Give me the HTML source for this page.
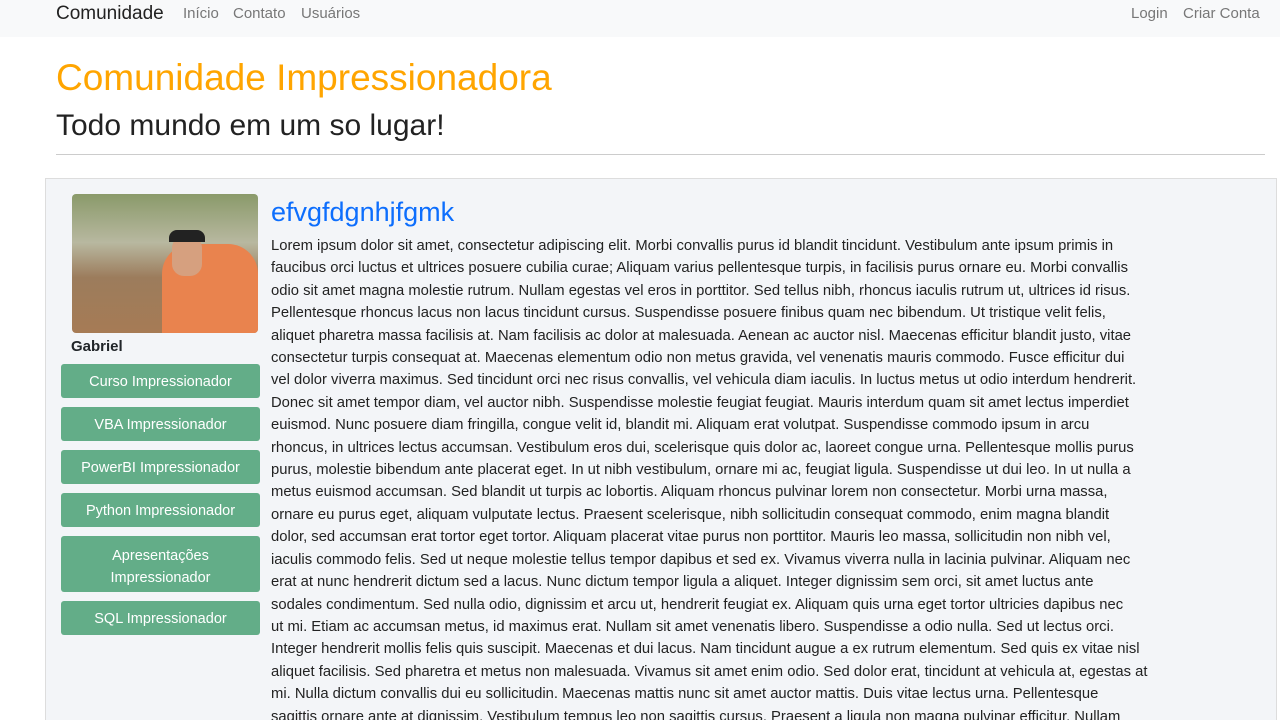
<!DOCTYPE html>
<html style="overflow:hidden;height:720px"><head><meta charset="utf-8"><style>
body{margin:0;font-family:"Liberation Sans",sans-serif;background:#fff;width:1280px;height:720px;overflow:hidden;color:#212529;position:relative}
.nav{height:37px;background:#f8f9fa;position:relative}
.nav span{position:absolute;top:5px;font-size:15px;color:#777}
.brand{left:56px!important;font-size:19px!important;color:#222!important;top:3px!important}
h1{position:absolute;left:56px;top:57px;margin:0;font-weight:400;font-size:37px;color:#ffa500}
h2{position:absolute;left:56px;top:109px;margin:0;font-weight:400;font-size:30px;color:#222}
.hr{position:absolute;left:56px;top:154px;width:1209px;height:1px;background:#ccc}
.card{position:absolute;left:45px;top:178px;width:1230px;height:542px;background:#f3f5f8;border:1px solid #ddd;border-bottom:none}
.photo{position:absolute;left:72px;top:194px;width:186px;height:139px;border-radius:4px;background:linear-gradient(180deg,#8a9a6a 0%,#b8b8a0 35%,#9c7c5c 60%,#a67b55 100%);overflow:hidden}
.name{position:absolute;left:71px;top:338px;font-weight:bold;font-size:15px}
.btn{position:absolute;left:61px;width:199px;background:#63ad88;color:#fff;font-size:14.5px;text-align:center;border-radius:3px;line-height:22px}
.t{position:absolute;left:271px;top:197px;font-size:27px;color:#0d6efd}
.txt{position:absolute;left:271px;top:235px;height:485px;overflow:hidden;font-size:14.8px;line-height:22.4px;color:#222;white-space:nowrap}
</style></head><body>
<div class="nav"><span class="brand">Comunidade</span><span style="left:183px">Início</span><span style="left:233px">Contato</span><span style="left:301px">Usuários</span><span style="left:1131px">Login</span><span style="left:1183px">Criar Conta</span></div>
<h1>Comunidade Impressionadora</h1>
<h2>Todo mundo em um so lugar!</h2>
<div class="hr"></div>
<div class="card"></div>
<div class="photo"><div style="position:absolute;left:90px;top:50px;width:96px;height:89px;background:#e9834e;border-radius:30px 30px 0 0"></div><div style="position:absolute;left:100px;top:42px;width:30px;height:40px;background:#d6a07f;border-radius:12px"></div><div style="position:absolute;left:97px;top:36px;width:36px;height:12px;background:#222;border-radius:8px 8px 0 0"></div></div>
<div class="name">Gabriel</div>
<div class="btn" style="top:364px;height:34px;line-height:37px">Curso Impressionador</div>
<div class="btn" style="top:407px;height:34px;line-height:37px">VBA Impressionador</div>
<div class="btn" style="top:450px;height:34px;line-height:37px">PowerBI Impressionador</div>
<div class="btn" style="top:493px;height:34px;line-height:37px">Python Impressionador</div>
<div class="btn" style="top:536px;height:56px;padding-top:9px;box-sizing:border-box">Apresentações<br>Impressionador</div>
<div class="btn" style="top:601px;height:34px;line-height:37px">SQL Impressionador</div>
<div class="t">efvgfdgnhjfgmk</div>
<div class="txt">Lorem ipsum dolor sit amet, consectetur adipiscing elit. Morbi convallis purus id blandit tincidunt. Vestibulum ante ipsum primis in<br>
faucibus orci luctus et ultrices posuere cubilia curae; Aliquam varius pellentesque turpis, in facilisis purus ornare eu. Morbi convallis<br>
odio sit amet magna molestie rutrum. Nullam egestas vel eros in porttitor. Sed tellus nibh, rhoncus iaculis rutrum ut, ultrices id risus.<br>
Pellentesque rhoncus lacus non lacus tincidunt cursus. Suspendisse posuere finibus quam nec bibendum. Ut tristique velit felis,<br>
aliquet pharetra massa facilisis at. Nam facilisis ac dolor at malesuada. Aenean ac auctor nisl. Maecenas efficitur blandit justo, vitae<br>
consectetur turpis consequat at. Maecenas elementum odio non metus gravida, vel venenatis mauris commodo. Fusce efficitur dui<br>
vel dolor viverra maximus. Sed tincidunt orci nec risus convallis, vel vehicula diam iaculis. In luctus metus ut odio interdum hendrerit.<br>
Donec sit amet tempor diam, vel auctor nibh. Suspendisse molestie feugiat feugiat. Mauris interdum quam sit amet lectus imperdiet<br>
euismod. Nunc posuere diam fringilla, congue velit id, blandit mi. Aliquam erat volutpat. Suspendisse commodo ipsum in arcu<br>
rhoncus, in ultrices lectus accumsan. Vestibulum eros dui, scelerisque quis dolor ac, laoreet congue urna. Pellentesque mollis purus<br>
purus, molestie bibendum ante placerat eget. In ut nibh vestibulum, ornare mi ac, feugiat ligula. Suspendisse ut dui leo. In ut nulla a<br>
metus euismod accumsan. Sed blandit ut turpis ac lobortis. Aliquam rhoncus pulvinar lorem non consectetur. Morbi urna massa,<br>
ornare eu purus eget, aliquam vulputate lectus. Praesent scelerisque, nibh sollicitudin consequat commodo, enim magna blandit<br>
dolor, sed accumsan erat tortor eget tortor. Aliquam placerat vitae purus non porttitor. Mauris leo massa, sollicitudin non nibh vel,<br>
iaculis commodo felis. Sed ut neque molestie tellus tempor dapibus et sed ex. Vivamus viverra nulla in lacinia pulvinar. Aliquam nec<br>
erat at nunc hendrerit dictum sed a lacus. Nunc dictum tempor ligula a aliquet. Integer dignissim sem orci, sit amet luctus ante<br>
sodales condimentum. Sed nulla odio, dignissim et arcu ut, hendrerit feugiat ex. Aliquam quis urna eget tortor ultricies dapibus nec<br>
ut mi. Etiam ac accumsan metus, id maximus erat. Nullam sit amet venenatis libero. Suspendisse a odio nulla. Sed ut lectus orci.<br>
Integer hendrerit mollis felis quis suscipit. Maecenas et dui lacus. Nam tincidunt augue a ex rutrum elementum. Sed quis ex vitae nisl<br>
aliquet facilisis. Sed pharetra et metus non malesuada. Vivamus sit amet enim odio. Sed dolor erat, tincidunt at vehicula at, egestas at<br>
mi. Nulla dictum convallis dui eu sollicitudin. Maecenas mattis nunc sit amet auctor mattis. Duis vitae lectus urna. Pellentesque<br>
sagittis ornare ante at dignissim. Vestibulum tempus leo non sagittis cursus. Praesent a ligula non magna pulvinar efficitur. Nullam</div>
</body></html>
